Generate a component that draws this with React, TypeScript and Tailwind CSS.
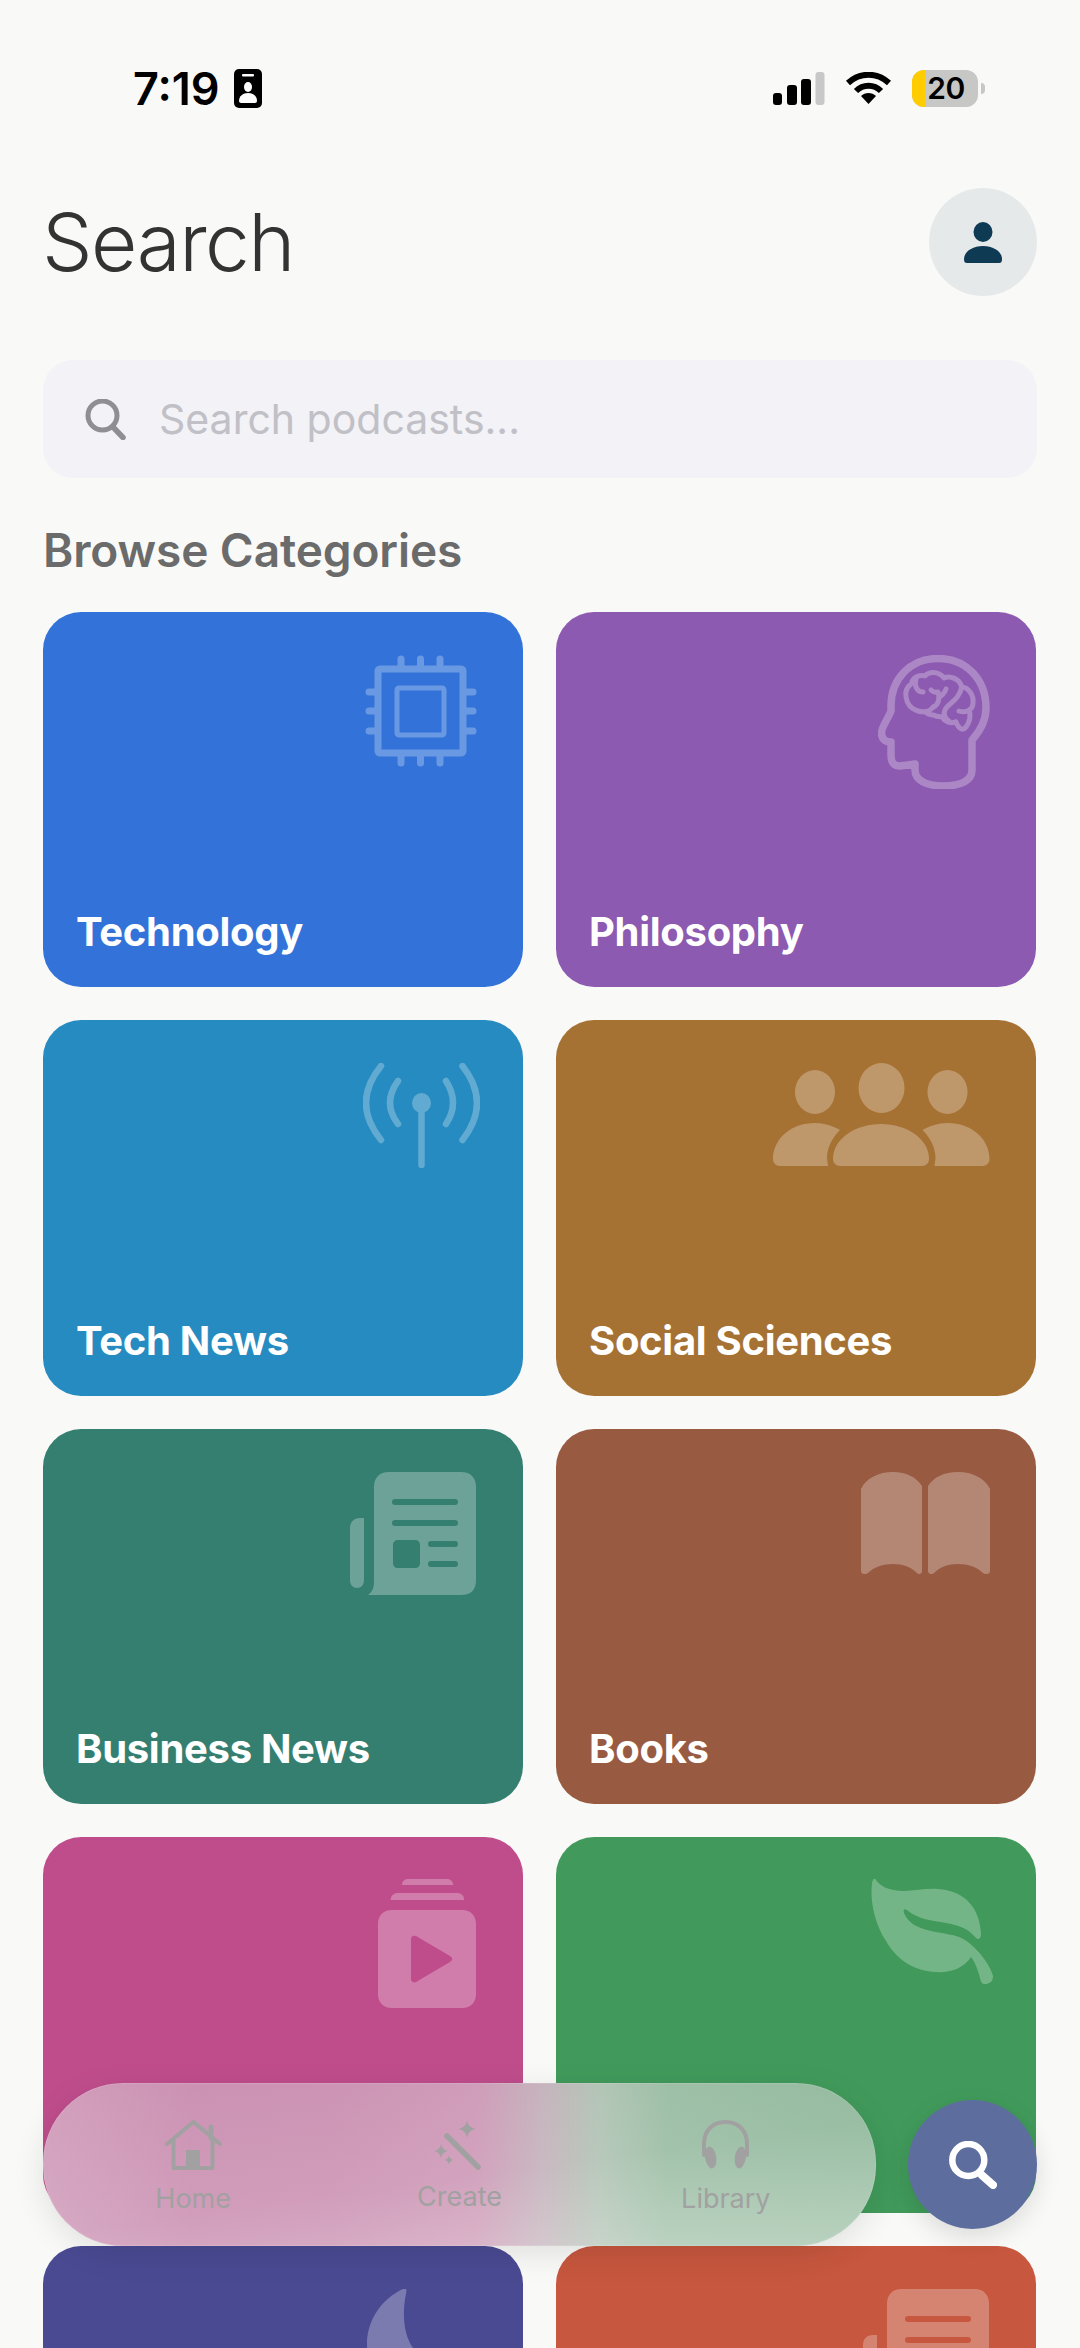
import React from 'react';

const sparkle = (x: number, y: number, r: number) => {
  const k = r * 0.16;
  return `M${x} ${y - r}Q${x + k} ${y - k} ${x + r} ${y}Q${x + k} ${y + k} ${x} ${y + r}Q${x - k} ${y + k} ${x - r} ${y}Q${x - k} ${y - k} ${x} ${y - r}Z`;
};

const ChipIcon = () => (
  <svg viewBox="0 0 112 112" className="w-[112px] h-[112px] mt-[43px] mr-[46px] self-end opacity-[.27]" fill="none" stroke="white">
    <rect x="13" y="14" width="85" height="84" rx="2" strokeWidth="7" />
    <rect x="32" y="33" width="47" height="47" rx="2" strokeWidth="5" />
    <path d="M36 4v8M55.5 4v8M75 4v8M36 100v8M55.5 100v8M75 100v8M4 37h8M4 56h8M4 76h8M100 37h8M100 56h8M100 76h8" strokeWidth="7" strokeLinecap="round" />
  </svg>
);

const BrainIcon = () => (
  <svg viewBox="0 0 112 134" className="w-[112px] h-[134px] mt-[43px] mr-[46px] self-end opacity-[.27]" fill="none" stroke="white" strokeLinecap="round" strokeLinejoin="round">
    <path strokeWidth="7.5" d="M94 85C104 74 108 64 108 53C108 24 88 3.5 60 3.5C32 3.5 13 24 13 51L13 56C10 64 3.5 72 3.5 78C3.5 84 7 87 13 87L13 100C13 108 16 111 22 111L37 109L37 115C37 125 48 131 65 131C84 131 94 125 94 115Z" />
    <path strokeWidth="5" d="M33.7 28.3C29 32 27 37 28 42C29 49 33 54 40 56C47 58 52 56 55.3 52M33.7 28.3C34 23 41 19 47 21C50 17 60 15 66 23C72 20 82 24 83.7 32C90 32 96 40 95 48C95 51 93 54 91.3 55C93 60 92 68 87 73C84 76 80 73 78 66.7C73 69 67 67 63.7 61.7C60 62 57 61 55.3 60C52 60 48 58 47 56.7" />
    <path strokeWidth="5" d="M45 37C39 37 36 31 38 24M60 37C62 42 61 50 55.3 52M60 37C57 38 54 36 53 35M68 34C67 38 65 39 63 41M83.7 32C82 42 74 47 69 52C65 56 65 62 71 66M91.3 55C87 58 84 57 81 56" />
  </svg>
);

const AntennaIcon = () => (
  <svg viewBox="0 0 117 105" className="w-[117px] h-[105px] mt-[43px] mr-[43px] self-end opacity-[.27]" fill="none" stroke="white" strokeLinecap="round">
    <path strokeWidth="6.5" d="M35 18Q19 40 35 61M83 18Q97 40 83 61M18 3Q-12 40 18 77M99.5 3Q128.5 40 99.5 77M58.5 40V102" />
    <ellipse cx="58.5" cy="40" rx="9.5" ry="10" fill="white" stroke="none" />
  </svg>
);

const PeopleIcon = () => (
  <svg viewBox="0 0 217 104" className="w-[217px] h-[104px] mt-[43px] mr-[46px] self-end opacity-[.27]" fill="white">
    <ellipse cx="108.5" cy="25" rx="23" ry="25" />
    <ellipse cx="42" cy="29" rx="20" ry="22" />
    <ellipse cx="174.5" cy="29" rx="20" ry="22" />
    <path d="M60 96C60 76 82 61 108 61C134 61 156 76 156 96C156 100 153 103 149 103H67C63 103 60 100 60 96Z" />
    <path d="M55 103H7C3 103 0 100 0 96C0 76 18 60 42 60C51 60 60 63 67 67C59 75 54 85 54 95Z" />
    <path d="M161.5 103H209.5C213.5 103 216.5 100 216.5 96C216.5 76 198.5 60 174.5 60C165.5 60 156.5 63 149.5 67C157.5 75 162.5 85 162.5 95Z" />
  </svg>
);

const NewsIcon = () => (
  <svg viewBox="0 0 126 123" className="w-[126px] h-[123px] mr-[47px] self-end mt-[43px] opacity-[.27]" fill="white">
    <path fillRule="evenodd" d="M39 0H111C121 0 126 6 126 15V108C126 118 121 123 111 123H18C22 120 24 116 24 110V15C24 6 29 0 39 0ZM45 27H105A2.7 2.7 0 0 1 105 33H45A2.7 2.7 0 0 1 45 27ZM45 48H105A2.7 2.7 0 0 1 105 54H45A2.7 2.7 0 0 1 45 48ZM48 68H65C68 68 70 70 70 73V91C70 94 68 96 65 96H48C45 96 43 94 43 91V73C43 70 45 68 48 68ZM81 69H105A2.7 2.7 0 0 1 105 75H81A2.7 2.7 0 0 1 81 69ZM81 89H105A2.7 2.7 0 0 1 105 95H81A2.7 2.7 0 0 1 81 89Z" />
    <path d="M14 46H10C4 46 0 50 0 56V108C0 113 3 116 7 116C11 116 14 113 14 108Z" />
  </svg>
);

const BookIcon = () => (
  <svg viewBox="0 0 129 102" className="w-[129px] h-[102px] mt-[43px] mr-[46px] self-end opacity-[.27]" fill="white">
    <path d="M0 17C5 6 18 0 32 0C45 0 55 5 61 14V99C61 102 58 103 56 101C50 95 42 92 32 92C22 92 13 95 7 101C4 103 0 102 0 99Z" />
    <path d="M67 14C73 5 83 0 97 0C111 0 124 6 129 17V99C129 102 125 103 122 101C116 95 107 92 97 92C87 92 79 95 73 101C71 103 67 102 67 99Z" />
  </svg>
);

const PlayStackIcon = () => (
  <svg viewBox="0 0 98 129" className="w-[98px] h-[129px] mt-[42px] mr-[47px] self-end opacity-[.27]" fill="white">
    <path d="M24 6C24 2 27 0 30 0H69C72 0 75 2 75 6Z" />
    <path d="M12.5 21C13 16 16 14 20 14H79C83 14 86 16 86 21Z" />
    <path fillRule="evenodd" d="M14 31H84C93 31 98 37 98 45V115C98 123 93 129 84 129H14C5 129 0 123 0 115V45C0 37 5 31 14 31ZM33 60V100C33 103 36 104 38 103L72 83C75 81 75 79 72 77L38 57C36 56 33 57 33 60Z" />
  </svg>
);

const LeafIcon = () => (
  <svg viewBox="0 0 122 105" className="w-[122px] h-[105px] mt-[42px] mr-[43px] self-end opacity-[.27]" fill="white">
    <path d="M4.5 0C8 7 18 12 33 12C45 12 55 9 67 10C95 12 109 30 110 55C110 60 107 61 105 59C95 47 85 46 70 43C55 41 44 38 36 31C33 29 32 31 33 34C37 44 46 49 60 52C72 55 85 55 94 61C106 69 119 85 122 97C122 103 118 105 114 105C111 105 110 103 109 99C107 91 104 83 100 78C92 90 78 94 65 93C45 92 27 83 15 62C3 44 -1 20 1 5C1.5 0 3 -1 4.5 0Z" />
  </svg>
);

const MoonIcon = () => (
  <svg viewBox="0 0 112 112" className="w-[112px] h-[112px] mt-[43px] mr-[46px] self-end opacity-[.27]" fill="white">
    <path d="M41 0C42 1 41 5 40 10C37 30 40 48 48 59C60 78 80 88 100 88C90 104 72 112 55 112C25 112 2 88 2 55C2 30 18 9 38 0Z" />
  </svg>
);

const categories = [
  { name: 'Technology', bg: 'bg-[#3373d9]', icon: <ChipIcon /> },
  { name: 'Philosophy', bg: 'bg-[#8c5ab0]', icon: <BrainIcon /> },
  { name: 'Tech News', bg: 'bg-[#268bc0]', icon: <AntennaIcon /> },
  { name: 'Social Sciences', bg: 'bg-[#a67234]', icon: <PeopleIcon /> },
  { name: 'Business News', bg: 'bg-[#357f71]', icon: <NewsIcon /> },
  { name: 'Books', bg: 'bg-[#995a42]', icon: <BookIcon /> },
  { name: '', bg: 'bg-[#bf4d8c]', icon: <PlayStackIcon /> },
  { name: '', bg: 'bg-[#419a5b]', icon: <LeafIcon /> },
  { name: '', bg: 'bg-[#4a4a93]', icon: <MoonIcon /> },
  { name: '', bg: 'bg-[#c7573e]', icon: <NewsIcon /> },
];

const StatusBar = () => (
  <div className="h-[176px] flex items-center justify-between pl-[133px] pr-[95px]">
    <div className="flex items-center gap-[14px]">
      <span className="text-[45px] font-semibold leading-none text-black">7:19</span>
      <svg viewBox="0 0 28 39" className="w-[28px] h-[39px]">
        <rect width="28" height="39" rx="5" fill="black" />
        <rect x="8" y="5" width="12" height="2.5" rx="1" fill="white" />
        <ellipse cx="14" cy="18" rx="4" ry="5" fill="white" />
        <path d="M5 32C5 27 9 24 14 24C19 24 23 27 23 32C23 33 22 34 21 34H7C6 34 5 33 5 32Z" fill="white" />
      </svg>
    </div>
    <div className="flex items-center">
      <svg viewBox="0 0 52 33" className="w-[52px] h-[33px] mr-[20px]">
        <rect x="0" y="21" width="9" height="12" rx="3" fill="black" />
        <rect x="14" y="13" width="10" height="20" rx="3" fill="black" />
        <rect x="28" y="7" width="10" height="26" rx="3" fill="black" />
        <rect x="42.5" y="0" width="9" height="33" rx="3" fill="#c8c8c8" />
      </svg>
      <svg viewBox="0 0 47 32" className="w-[47px] h-[32px] mr-[20px]" fill="none" stroke="black" strokeWidth="6">
        <path d="M3 11C15 0 32 0 44 11" />
        <path d="M11 19C18 12 29 12 36 19" />
        <path d="M23.5 32L16 24C20 20 27 20 31 24Z" fill="black" stroke="none" />
      </svg>
      <div className="relative w-[66px] h-[37px] rounded-[12px] bg-[#c7c7c5] overflow-hidden flex items-center justify-center pl-[2px]">
        <div className="absolute left-0 top-0 bottom-0 w-[13px] bg-[#ffcc00]" />
        <span className="relative text-[30px] font-semibold leading-none text-black tracking-[-.5px]">20</span>
      </div>
      <div className="w-[4px] h-[11px] ml-[3px] rounded-r-full bg-[#c7c7c5]" />
    </div>
  </div>
);

// the frosted pill: colours of what lies behind it, washed out towards the bottom
const BottomNav = () => (
  <>
    <div className="absolute left-[43px] top-[2083px] w-[833px] h-[163px] rounded-[80px] px-[17px] grid grid-cols-3 bg-[linear-gradient(to_right,rgba(249,249,247,0.14)_0%,rgba(249,249,247,0)_18%),linear-gradient(172deg,rgba(249,249,247,0)_0%,rgba(249,249,247,0.12)_55%,rgba(249,249,247,0.36)_90%,rgba(249,249,247,0.42)_100%),linear-gradient(to_right,#cb90b2_0%,#cb90b2_35%,#cd97b6_52%,#c3b0ba_60%,#aec2b2_67%,#97bba1_75%,#8ab596_100%)] shadow-[0_8px_32px_rgba(0,0,0,0.1),inset_0_0_0_1px_rgba(255,255,255,0.12)] text-[#a1a1a1]">
      <div className="flex flex-col items-center pt-[37px]">
        <svg viewBox="0 0 57 50" className="w-[57px] h-[50px]" fill="none" stroke="currentColor">
          <path d="M2 24L28.5 2L55 24" strokeWidth="4" strokeLinecap="round" strokeLinejoin="round" />
          <path d="M8.5 19V48H47.5V19" strokeWidth="4" strokeLinejoin="round" />
          <path d="M46 7V18" strokeWidth="5" strokeLinecap="round" />
          <rect x="21" y="30" width="14" height="18" fill="currentColor" stroke="none" />
        </svg>
        <span className="text-[27px] leading-[32px] mt-[13px]">Home</span>
      </div>
      <div className="flex flex-col items-center pt-[38px]">
        <svg viewBox="0 0 50 50" className="w-[50px] h-[50px]" fill="currentColor">
          <path d={sparkle(33, 8, 8.5)} />
          <path d={sparkle(7, 30, 7)} />
          <path d={sparkle(15, 39, 4.5)} />
          <path d="M13 15L44 46" stroke="currentColor" strokeWidth="5.5" strokeLinecap="round" />
        </svg>
        <span className="text-[27px] leading-[32px] mt-[10px]">Create</span>
      </div>
      <div className="flex flex-col items-center pt-[36px]">
        <svg viewBox="0 0 49 50" className="w-[49px] h-[50px]" fill="currentColor">
          <path d="M3 36V25C3 11 12 3 24.5 3C37 3 46 11 46 25V36" fill="none" stroke="currentColor" strokeWidth="4" strokeLinecap="round" />
          <ellipse cx="9.7" cy="38.5" rx="5.5" ry="11" transform="rotate(-8 9.7 38.5)" />
          <ellipse cx="39.3" cy="38.5" rx="5.5" ry="11" transform="rotate(8 39.3 38.5)" />
        </svg>
        <span className="text-[27px] leading-[32px] mt-[14px]">Library</span>
      </div>
    </div>
    <div className="absolute left-[908px] top-[2100px] w-[129px] h-[129px] rounded-full bg-[#5d6e9e] flex items-center justify-center shadow-[0_8px_24px_rgba(0,0,0,0.12)]">
      <svg viewBox="0 0 48 48" className="w-[48px] h-[48px]" fill="none" stroke="white" strokeLinecap="round">
        <circle cx="19.3" cy="19" r="16" strokeWidth="6.5" />
        <path d="M32.7 34L44 44" strokeWidth="8" />
      </svg>
    </div>
  </>
);

export default function App() {
  return (
    <div className="relative w-[1080px] h-[2348px] overflow-hidden bg-[#f9f9f7] font-['Inter',sans-serif]">
      <StatusBar />
      <div className="mt-[12px] px-[43px] h-[108px] flex items-center justify-between">
        <h1 className="text-[80px] font-light leading-none text-[#333333] tracking-[-1.5px] -ml-[1px]">Search</h1>
        <div className="w-[108px] h-[108px] rounded-full bg-[#e5e9ea] flex items-center justify-center">
          <svg viewBox="0 0 38 41" className="w-[38px] h-[41px]" fill="#0e3a53">
            <ellipse cx="19" cy="10" rx="9.5" ry="10" />
            <path d="M0 37C0 30 8 24 19 24C30 24 38 30 38 37C38 40 37 41 35 41H3C1 41 0 40 0 37Z" />
          </svg>
        </div>
      </div>
      <div className="mt-[64px] mx-[43px] h-[118px] rounded-[30px] bg-[#f2f2f7] flex items-center pl-[42px] gap-[33px]">
        <svg viewBox="0 0 41 41" className="w-[41px] h-[41px]" fill="none" stroke="#8e8e93" strokeLinecap="round">
          <circle cx="17.5" cy="16.5" r="14.5" strokeWidth="5" />
          <path d="M28 28L38 38.5" strokeWidth="5.5" />
        </svg>
        <span className="text-[41px] leading-none text-[#c0c0c6]">Search podcasts...</span>
      </div>
      <div className="mt-[36px] mx-[43px] h-[72px] flex items-center text-[46px] font-semibold text-[#6b6b6b] tracking-[-.1px]">Browse Categories</div>
      <div className="mt-[25.5px] pl-[43px] pr-[44px] grid grid-cols-2 gap-x-[33px] gap-y-[33px] auto-rows-[375.5px]">
        {categories.map((c, i) => (
          <div key={i} className={`${c.bg} rounded-[38px] flex flex-col`}>
            {c.icon}
            {c.name && <span className="mt-auto pl-[33px] pb-[30px] text-[40px] leading-[50px] font-bold text-white tracking-[-.3px]">{c.name}</span>}
          </div>
        ))}
      </div>
      <BottomNav />
    </div>
  );
}
